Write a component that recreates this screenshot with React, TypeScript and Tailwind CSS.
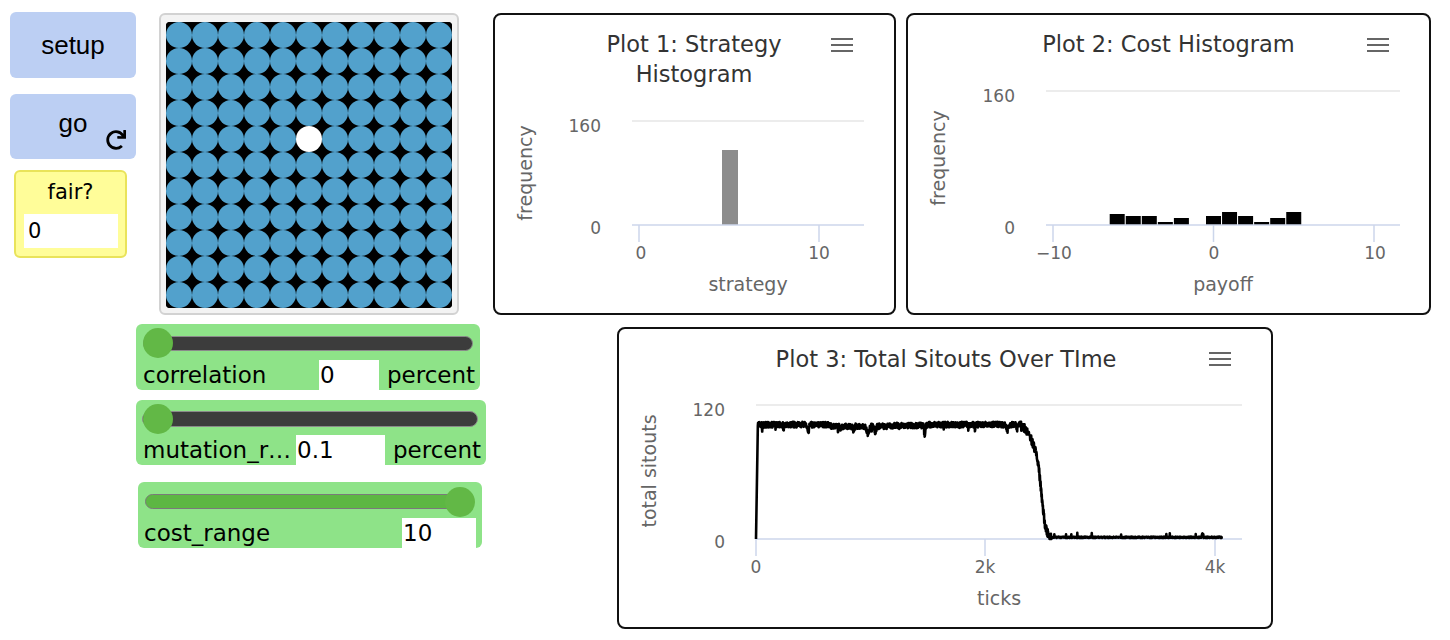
import React from "react";
import { FaRedo } from "react-icons/fa";

function mulberry32(a: number) {
  return function () {
    a |= 0;
    a = (a + 0x6d2b79f5) | 0;
    let t = Math.imul(a ^ (a >>> 15), 1 | a);
    t = (t + Math.imul(t ^ (t >>> 7), 61 | t)) ^ t;
    return ((t ^ (t >>> 14)) >>> 0) / 4294967296;
  };
}

function interp(knots: [number, number][], t: number) {
  for (let i = 0; i < knots.length - 1; i++) {
    const [t0, v0] = knots[i];
    const [t1, v1] = knots[i + 1];
    if (t >= t0 && t <= t1) return v0 + ((t - t0) / (t1 - t0)) * (v1 - v0);
  }
  return knots[knots.length - 1][1];
}

function buildLine(): string {
  const rand = mulberry32(12345);
  const pts: string[] = [];
  const decline: [number, number][] = [
    [2330, 101],
    [2370, 95],
    [2410, 86],
    [2445, 76],
    [2470, 58],
    [2495, 32],
    [2520, 12],
    [2545, 4],
    [2580, 1],
  ];
  let dip = 0;
  for (let t = 0; t <= 4060; t += 2) {
    let v: number;
    if (t < 16) {
      v = (t / 16) * 101;
    } else if (t < 2330) {
      let base = 102.4;
      base -= 7 * Math.exp(-(((t - 455) / 8) ** 2));
      base -= 7 * Math.exp(-(((t - 975) / 14) ** 2));
      base -= 5 * Math.exp(-(((t - 1040) / 10) ** 2));
      base -= 6 * Math.exp(-(((t - 1470) / 8) ** 2));
      base -= 5 * Math.exp(-(((t - 2190) / 8) ** 2));
      base -= 4 * Math.exp(-(((t - 2275) / 8) ** 2));
      if (t > 650 && t < 1150) base -= 1.5;
      if (t > 1150 && t < 1450) base -= 0.8;
      if (dip <= 0 && rand() < 0.012) dip = 2 + rand() * 4;
      if (dip > 0) {
        base -= dip;
        dip -= 0.8;
      }
      v = base + (rand() - 0.5) * 5;
    } else if (t < 2580) {
      v = interp(decline, t) + (rand() - 0.5) * 8;
    } else {
      v = 0.9 + rand() * 1.2;
      if (rand() < 0.015) v += 2 + rand() * 2;
      if (t > 3885 && t < 3900) v += 3;
    }
    if (v < 0) v = 0;
    const x = 137 + t * 0.11475;
    const y = 210 - v * 1.1167;
    pts.push(`${x.toFixed(2)},${y.toFixed(2)}`);
  }
  return pts.join(" ");
}

const LINE = buildLine();

const Menu = ({ x }: { x: number }) => (
  <g stroke="#666666" strokeWidth={2}>
    <line x1={x} x2={x + 22} y1={24} y2={24} />
    <line x1={x} x2={x + 22} y1={30} y2={30} />
    <line x1={x} x2={x + 22} y1={36} y2={36} />
  </g>
);

type SliderProps = {
  boxClass: string;
  topClass: string;
  trackClass: string;
  thumbClass: string;
  label: string;
  labelClass: string;
  value: string;
  valueClass: string;
  units?: string;
};

function Slider(p: SliderProps) {
  return (
    <div className={`${p.boxClass} bg-[#8ee388] rounded-[6px] flex flex-col overflow-hidden`}>
      <div className={`relative ${p.topClass}`}>
        <div className={p.trackClass} />
        <div className={p.thumbClass} />
      </div>
      <div className="flex h-[30px] leading-[30px] text-[23px] text-black">
        <div className={p.labelClass}>{p.label}</div>
        <div className={p.valueClass}>{p.value}</div>
        {p.units && <div className="ml-[8px]">{p.units}</div>}
      </div>
    </div>
  );
}

function View() {
  const cells: React.ReactNode[] = [];
  for (let j = 0; j < 11; j++) {
    for (let i = 0; i < 11; i++) {
      const white = i === 5 && j === 4;
      cells.push(
        <circle
          key={`${i}-${j}`}
          cx={13 + 26 * i}
          cy={13 + 26 * j}
          r={13}
          fill={white ? "#ffffff" : "#52a1cc"}
        />
      );
    }
  }
  return (
    <div className="ml-[23px] mt-[13px] w-[300px] h-[302px] border-2 border-[#d2d2d2] rounded-[6px] bg-[#f3f3f3] pt-[7px] pl-[5px]">
      <div className="w-[286px] h-[286px] bg-black rounded-[4px] overflow-hidden">
        <svg width={286} height={286} className="block">
          <rect width={286} height={286} fill="#000" />
          {cells}
        </svg>
      </div>
    </div>
  );
}

const AX = "#ccd6eb";
const GRID = "#e6e6e6";
const LBL = "#666666";

function Plot1() {
  return (
    <div className="w-[403px] h-[302px] border-2 border-[#111111] rounded-[8px] bg-white overflow-hidden">
      <svg width={399} height={298} className="block font-['DejaVu_Sans',sans-serif]">
        <text x={199} y={37} textAnchor="middle" fontSize={22.5} fill="#333333">Plot 1: Strategy</text>
        <text x={199} y={67} textAnchor="middle" fontSize={22.5} fill="#333333">Histogram</text>
        <Menu x={336} />
        <line x1={137} x2={369} y1={106} y2={106} stroke={GRID} strokeWidth={1.5} />
        <rect x={227} y={135} width={16} height={75} fill="#8c8c8c" />
        <line x1={137} x2={369} y1={210} y2={210} stroke={AX} strokeWidth={1.5} />
        <line x1={144} x2={144} y1={210} y2={227} stroke={AX} strokeWidth={1.5} />
        <line x1={324} x2={324} y1={210} y2={227} stroke={AX} strokeWidth={1.5} />
        <text x={106} y={117} textAnchor="end" fontSize={17} fill={LBL}>160</text>
        <text x={106} y={219} textAnchor="end" fontSize={17} fill={LBL}>0</text>
        <text x={146} y={244} textAnchor="middle" fontSize={17} fill={LBL}>0</text>
        <text x={324} y={244} textAnchor="middle" fontSize={17} fill={LBL}>10</text>
        <text x={253} y={276} textAnchor="middle" fontSize={19} fill={LBL}>strategy</text>
        <text x={37} y={158} textAnchor="middle" fontSize={19} fill={LBL} transform="rotate(-90 37 158)">frequency</text>
      </svg>
    </div>
  );
}

function Plot2() {
  const bars: [number, number][] = [
    [-6, 11],
    [-5, 9],
    [-4, 9],
    [-3, 3],
    [-2, 7],
    [0, 9],
    [1, 13],
    [2, 9],
    [3, 3],
    [4, 7],
    [5, 13],
  ];
  return (
    <div className="ml-[10px] w-[525px] h-[302px] border-2 border-[#111111] rounded-[8px] bg-white overflow-hidden">
      <svg width={521} height={298} className="block font-['DejaVu_Sans',sans-serif]">
        <text x={260.5} y={37} textAnchor="middle" fontSize={22.5} fill="#333333">Plot 2: Cost Histogram</text>
        <Menu x={459} />
        <line x1={138} x2={492} y1={76} y2={76} stroke={GRID} strokeWidth={1.5} />
        {bars.map(([k, h]) => (
          <rect key={k} x={305.5 + 16.05 * k - 7.5} y={210 - h} width={15} height={h} fill="#000" />
        ))}
        <line x1={138} x2={492} y1={210} y2={210} stroke={AX} strokeWidth={1.5} />
        <line x1={145} x2={145} y1={210} y2={227} stroke={AX} strokeWidth={1.5} />
        <line x1={305.5} x2={305.5} y1={210} y2={227} stroke={AX} strokeWidth={1.5} />
        <line x1={466} x2={466} y1={210} y2={227} stroke={AX} strokeWidth={1.5} />
        <text x={107} y={87} textAnchor="end" fontSize={17} fill={LBL}>160</text>
        <text x={107} y={219} textAnchor="end" fontSize={17} fill={LBL}>0</text>
        <text x={146} y={244} textAnchor="middle" fontSize={17} fill={LBL}>−10</text>
        <text x={306} y={244} textAnchor="middle" fontSize={17} fill={LBL}>0</text>
        <text x={467} y={244} textAnchor="middle" fontSize={17} fill={LBL}>10</text>
        <text x={315} y={276} textAnchor="middle" fontSize={19} fill={LBL}>payoff</text>
        <text x={37} y={143} textAnchor="middle" fontSize={19} fill={LBL} transform="rotate(-90 37 143)">frequency</text>
      </svg>
    </div>
  );
}

function Plot3() {
  return (
    <div className="ml-[124px] mt-[12px] w-[656px] h-[302px] border-2 border-[#111111] rounded-[8px] bg-white overflow-hidden">
      <svg width={652} height={298} className="block font-['DejaVu_Sans',sans-serif]">
        <text x={327} y={38} textAnchor="middle" fontSize={22.5} fill="#333333">Plot 3: Total Sitouts Over TIme</text>
        <Menu x={590} />
        <line x1={137} x2={623} y1={76} y2={76} stroke={GRID} strokeWidth={1.5} />
        <line x1={137} x2={623} y1={210} y2={210} stroke={AX} strokeWidth={1.5} />
        <line x1={137} x2={137} y1={210} y2={227} stroke={AX} strokeWidth={1.5} />
        <line x1={366} x2={366} y1={210} y2={227} stroke={AX} strokeWidth={1.5} />
        <line x1={596} x2={596} y1={210} y2={227} stroke={AX} strokeWidth={1.5} />
        <polyline points={LINE} fill="none" stroke="#000" strokeWidth={2.6} strokeLinejoin="round" />
        <text x={106} y={87} textAnchor="end" fontSize={17} fill={LBL}>120</text>
        <text x={106} y={219} textAnchor="end" fontSize={17} fill={LBL}>0</text>
        <text x={137} y={244} textAnchor="middle" fontSize={17} fill={LBL}>0</text>
        <text x={366} y={244} textAnchor="middle" fontSize={17} fill={LBL}>2k</text>
        <text x={596} y={244} textAnchor="middle" fontSize={17} fill={LBL}>4k</text>
        <text x={380} y={276} textAnchor="middle" fontSize={19} fill={LBL}>ticks</text>
        <text x={37} y={142} textAnchor="middle" fontSize={19} fill={LBL} transform="rotate(-90 37 142)">total sitouts</text>
      </svg>
    </div>
  );
}

export default function App() {
  return (
    <div className="w-[1450px] h-[640px] bg-white flex items-start pl-[10px] font-['DejaVu_Sans',sans-serif] text-black overflow-hidden">
      {/* buttons and monitor */}
      <div className="flex flex-col w-[126px] shrink-0">
        <div className="mt-[12px] h-[66px] rounded-[6px] bg-[#bccff3] flex items-center justify-center font-['Liberation_Sans',sans-serif] text-[26px] text-black">
          setup
        </div>
        <div className="mt-[16px] h-[65px] rounded-[6px] bg-[#bccff3] relative flex justify-center pt-[15px] leading-[28px] font-['Liberation_Sans',sans-serif] text-[26px] text-black">
          <span>go</span>
          <FaRedo className="absolute right-[10px] bottom-[9px] text-black" size={20} />
        </div>
        <div className="ml-[4px] mt-[11px] w-[113px] h-[88px] border-2 border-[#e9e35a] bg-[#fffd99] rounded-[6px] flex flex-col">
          <div className="mt-[8px] text-center text-[21px] leading-[24px]">fair?</div>
          <div className="ml-[8px] mt-[10px] w-[94px] h-[34px] bg-white pl-[4px] text-[21px] leading-[34px]">0</div>
        </div>
      </div>

      {/* view and sliders */}
      <div className="flex flex-col w-[350px] shrink-0">
        <View />
        <Slider
          boxClass="mt-[9px] w-[344px] h-[66px]"
          topClass="h-[36px]"
          trackClass="mt-[12px] ml-[7px] mr-[7px] h-[15px] rounded-full bg-[#3c3c3c] border-[1.5px] border-[#8a8a8a]"
          thumbClass="absolute left-[7px] top-[4px] w-[30px] h-[30px] rounded-full bg-[#62b846]"
          label="correlation"
          labelClass="w-[183px] pl-[7px]"
          value="0"
          valueClass="w-[60px] bg-white pl-[1px]"
          units="percent"
        />
        <Slider
          boxClass="mt-[10px] w-[350px] h-[65px]"
          topClass="h-[35px]"
          trackClass="mt-[11px] ml-[6px] mr-[8px] h-[16px] rounded-full bg-[#3c3c3c] border-[1.5px] border-[#8a8a8a]"
          thumbClass="absolute left-[7px] top-[4px] w-[30px] h-[30px] rounded-full bg-[#62b846]"
          label="mutation_r…"
          labelClass="w-[160px] pl-[7px] overflow-hidden whitespace-nowrap"
          value="0.1"
          valueClass="w-[89px] bg-white pl-[1px]"
          units="percent"
        />
        <Slider
          boxClass="mt-[17px] ml-[2px] w-[344px] h-[66px]"
          topClass="h-[36px]"
          trackClass="mt-[12px] ml-[7px] mr-[9px] h-[15px] rounded-full bg-[#5db743] border-[1.5px] border-[#7a7a7a]"
          thumbClass="absolute left-[307px] top-[5px] w-[30px] h-[30px] rounded-full bg-[#62b846]"
          label="cost_range"
          labelClass="w-[264px] pl-[6px]"
          value="10"
          valueClass="w-[74px] bg-white pl-[1px]"
        />
      </div>

      {/* plots */}
      <div className="ml-[7px] flex flex-col shrink-0">
        <div className="flex mt-[13px]">
          <Plot1 />
          <Plot2 />
        </div>
        <Plot3 />
      </div>
    </div>
  );
}
